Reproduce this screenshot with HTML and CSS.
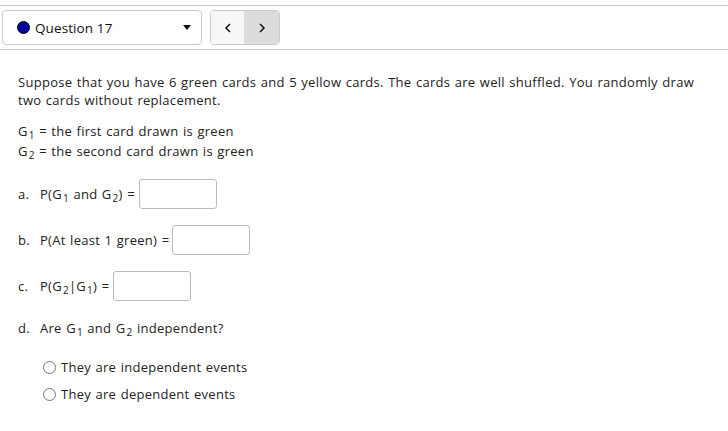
FILE: index.html
```html
<!DOCTYPE html>
<html>
<head>
<meta charset="utf-8">
<link rel="stylesheet" href="styles.css">
</head>
<body>
<div class="header">
  <div class="select">
    <span class="dot"></span>
    <span class="qlabel">Question 17</span>
    <span class="caret"></span>
  </div>
  <div class="nav">
    <button class="navbtn prev"><svg width="8" height="10" viewBox="0 0 8 10"><path d="M6 1 L2 5 L6 9" fill="none" stroke="#111" stroke-width="1.5"/></svg></button>
    <button class="navbtn next"><svg width="8" height="10" viewBox="0 0 8 10"><path d="M2 1 L6 5 L2 9" fill="none" stroke="#111" stroke-width="1.5"/></svg></button>
  </div>
</div>
<div class="content">
  <p class="intro">Suppose that you have 6 green cards and 5 yellow cards. The cards are well shuffled. You randomly draw two cards without replacement.</p>
  <div class="defs">
    <div>G<sub>1</sub> = the first card drawn is green</div>
    <div>G<sub>2</sub> = the second card drawn is green</div>
  </div>
  <div class="row row-a"><span class="lbl">a.</span><span>P(G<sub>1</sub> and G<sub>2</sub>) =</span><span class="input"></span></div>
  <div class="row row-b"><span class="lbl">b.</span><span>P(At least 1 green) =</span><span class="input tight"></span></div>
  <div class="row row-c"><span class="lbl">c.</span><span>P(G<sub>2</sub>|G<sub>1</sub>) =</span><span class="input"></span></div>
  <div class="qd"><span class="lbl">d.</span><span>Are G<sub>1</sub> and G<sub>2</sub> independent?</span></div>
  <div class="options">
    <label class="opt"><span class="radio"></span>They are independent events</label>
    <label class="opt"><span class="radio"></span>They are dependent events</label>
  </div>
</div>
</body>
</html>
```
FILE: styles.css
```css
* { box-sizing: border-box; }
body {
  margin: 0;
  font-family: "Open Sans", "Noto Sans", sans-serif;
  font-size: 13px;
  color: #222;
  background: #fff;
}
.header {
  margin-top: 5px;
  border-top: 1px solid #ccc;
  border-bottom: 1px solid #ccc;
  padding: 4px 0 4px 2px;
  display: flex;
  align-items: center;
  gap: 8px;
}
.select {
  width: 200px;
  height: 35px;
  border: 1px solid #ccc;
  border-radius: 4px;
  display: flex;
  align-items: center;
  padding-left: 14px;
  padding-right: 10px;
}
.dot {
  width: 13px;
  height: 13px;
  border-radius: 50%;
  background: #00009c;
  border: 1px solid #000;
  flex: none;
}
.qlabel {
  margin-left: 5px;
  font-size: 13.5px;
  letter-spacing: 0.1px;
  color: #111;
  flex: 1;
}
.caret {
  width: 0;
  height: 0;
  border-left: 4px solid transparent;
  border-right: 4px solid transparent;
  border-top: 5px solid #111;
}
.nav {
  display: flex;
  height: 35px;
  border: 1px solid #ccc;
  border-radius: 4px;
  overflow: hidden;
}
.navbtn {
  width: 34px;
  height: 100%;
  border: 0;
  padding: 0;
  display: flex;
  align-items: center;
  justify-content: center;
}
.prev { background: #f7f7f7; border-right: 1px solid #ddd; }
.next { background: #dcdcdc; }
.content {
  padding-left: 18px;
  letter-spacing: 0.28px;
  word-spacing: 0.8px;
}
.intro {
  margin: 23px 0 0;
  line-height: 18px;
  padding-right: 12px;
}
sub {
  font-size: 10px;
  vertical-align: -3px;
  line-height: 0;
  margin-left: 1px;
}
.defs {
  margin-top: 12px;
  line-height: 20px;
}
.row {
  display: flex;
  align-items: center;
  height: 30px;
  margin-top: 16px;
}
.row-a { margin-top: 18px; }
.lbl {
  width: 22px;
  flex: none;
}
.input {
  width: 78px;
  height: 30px;
  border: 1px solid #bbb;
  border-radius: 3px;
  margin-left: 4px;
  background: #fff;
}
.input.tight { margin-left: 3px; }
.qd {
  display: flex;
  margin-top: 17px;
  line-height: 20px;
}
.options {
  margin-top: 19px;
  padding-left: 25px;
  display: flex;
  flex-direction: column;
  gap: 7px;
}
.opt {
  display: flex;
  align-items: center;
  height: 20px;
}
.radio {
  width: 13px;
  height: 13px;
  border: 1px solid #777;
  border-radius: 50%;
  margin-right: 5px;
  background: #fff;
}
```
